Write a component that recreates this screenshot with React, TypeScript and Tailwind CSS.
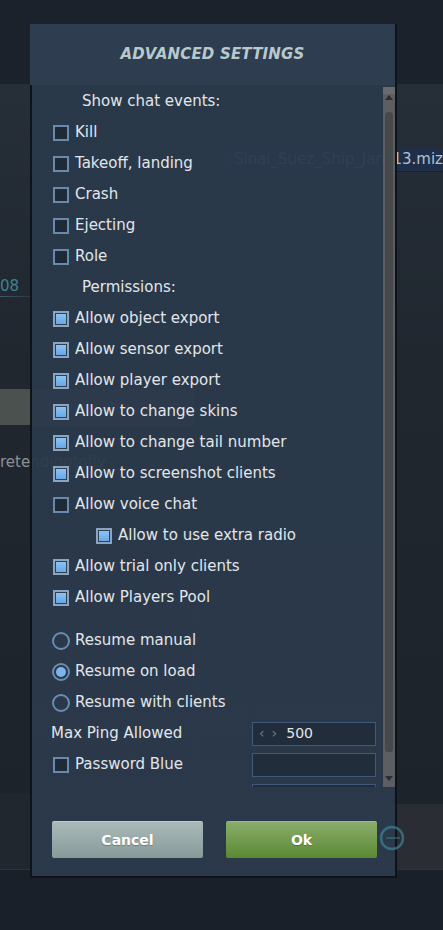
import React from "react";

const FONT = "font-['DejaVu_Sans','Noto_Sans',sans-serif]";

function Box({ checked }: { checked: boolean }) {
  return (
    <div
      className={
        "w-[16px] h-[16px] shrink-0 border-2 p-px " +
        (checked ? "border-[#8aa5c2] bg-[#32414f]" : "border-[#6a8aad] bg-[#1f2a37]")
      }
    >
      {checked && <div className="w-full h-full bg-[linear-gradient(180deg,#8cc3f3,#6aa7e6)]" />}
    </div>
  );
}

function Radio({ selected }: { selected: boolean }) {
  return (
    <div className="w-[18px] h-[18px] shrink-0 rounded-full border-2 border-[#6a8cb0] flex items-center justify-center">
      {selected && <div className="w-[10px] h-[10px] rounded-full bg-[#7ab5ee]" />}
    </div>
  );
}

type Row =
  | { kind: "label"; text: string }
  | { kind: "check"; text: string; checked: boolean; indent?: boolean };

const rows: Row[] = [
  { kind: "label", text: "Show chat events:" },
  { kind: "check", text: "Kill", checked: false },
  { kind: "check", text: "Takeoff, landing", checked: false },
  { kind: "check", text: "Crash", checked: false },
  { kind: "check", text: "Ejecting", checked: false },
  { kind: "check", text: "Role", checked: false },
  { kind: "label", text: "Permissions:" },
  { kind: "check", text: "Allow object export", checked: true },
  { kind: "check", text: "Allow sensor export", checked: true },
  { kind: "check", text: "Allow player export", checked: true },
  { kind: "check", text: "Allow to change skins", checked: true },
  { kind: "check", text: "Allow to change tail number", checked: true },
  { kind: "check", text: "Allow to screenshot clients", checked: true },
  { kind: "check", text: "Allow voice chat", checked: false },
  { kind: "check", text: "Allow to use extra radio", checked: true, indent: true },
  { kind: "check", text: "Allow trial only clients", checked: true },
  { kind: "check", text: "Allow Players Pool", checked: true },
];

const radios = [
  { text: "Resume manual", sel: false },
  { text: "Resume on load", sel: true },
  { text: "Resume with clients", sel: false },
];

function Scrollbar() {
  return (
    <div className="w-[12px] mt-[2px] h-[700px] bg-[#5d5e61] flex flex-col items-center shrink-0">
      <div className="h-[7px] w-full bg-[#6a6b6e]" />
      <div className="mt-[1px] w-0 h-0 border-l-[4px] border-r-[4px] border-b-[5px] border-l-transparent border-r-transparent border-b-[#2c2d30]" />
      <div className="mt-[12px] w-[8px] h-[640px] rounded-t-[4px] rounded-b-[3px] bg-[#47484b]" />
      <div className="mt-auto mb-[6px] w-0 h-0 border-l-[4px] border-r-[4px] border-t-[5px] border-l-transparent border-r-transparent border-t-[#2c2d30]" />
    </div>
  );
}

export default function App() {
  return (
    <div className={"relative w-[443px] h-[930px] overflow-hidden bg-[#19202a] " + FONT}>
      {/* background */}
      <div className="h-[85px] bg-[#1b222b] border-b border-[#262e38]" />
      <div className="h-[785px] flex bg-[linear-gradient(180deg,#262e38_0%,#20272f_35%,#1c232b_100%)] border-b border-[#2b323b]">
        <div className="w-[216px] flex flex-col">
          <div className="mt-[191px] h-[20px] leading-[20px] text-[15px] text-[#3f8291]">08</div>
          <div className="h-px w-[45px] bg-[linear-gradient(90deg,#3b5c66,transparent)]" />
          <div className="mt-[92px] h-[36px] w-[195px] bg-[#4a514f] flex items-center pl-[45px] text-[15px] text-[#6f7876]">
            Advanced
          </div>
          <div className="mt-[27px] h-[20px] leading-[20px] text-[15px] text-[#8a9196] whitespace-nowrap">
            retendingtofly
          </div>
          <div className="mt-auto h-[75px] bg-[#20272f]" />
        </div>
        <div className="flex-1 border-l border-[#2e3944] flex flex-col">
          <div className="mt-[62px] ml-[20px] h-[25px] bg-[#1e3049] border-b border-[#17202b] flex items-center pl-[14px] text-[15px] text-[#b4c0cc] whitespace-nowrap overflow-hidden">
            Sinai_Suez_Ship_Jan_13.miz
          </div>
          <div className="mt-auto h-[65px] bg-[#2a2d33]" />
        </div>
      </div>

      {/* dialog */}
      <div className="absolute left-[30px] top-[24px] w-[367px] h-[854px] flex flex-col border-r-2 border-b-2 border-[#0e1319]">
        <div className="h-[61px] bg-[#2e3d4f] flex items-center justify-center">
          <span className="text-[15px] font-bold italic text-[#b8c9cd] tracking-[0.2px]">ADVANCED SETTINGS</span>
        </div>
        <div className="flex-1 flex flex-col border-l-2 border-[#0e1319] bg-[linear-gradient(180deg,rgba(42,57,74,0.95),rgba(43,58,76,0.94))]">
          <div className="h-[702px] flex">
            <div className="flex-1 overflow-hidden pl-[21px] pt-px text-[15px] text-[#e2e6e9]">
              {rows.map((r, i) =>
                r.kind === "label" ? (
                  <div key={i} className="h-[31px] flex items-center pl-[29px] whitespace-nowrap">
                    {r.text}
                  </div>
                ) : (
                  <div
                    key={i}
                    className={"h-[31px] flex items-center gap-[6px] whitespace-nowrap " + (r.indent ? "pl-[43px]" : "")}
                  >
                    <Box checked={r.checked} />
                    <span>{r.text}</span>
                  </div>
                )
              )}
              <div className="h-[12px]" />
              {radios.map((r, i) => (
                <div key={i} className="h-[31px] flex items-center gap-[5px] -ml-px whitespace-nowrap">
                  <Radio selected={r.sel} />
                  <span>{r.text}</span>
                </div>
              ))}
              <div className="h-[31px] flex items-center whitespace-nowrap">
                <span className="-ml-[2px]">Max Ping Allowed</span>
                <div className="ml-auto mr-[7px] w-[124px] h-[24px] border border-[#3e5979] bg-[#222d3b] flex items-center pl-[6px] text-[14px]">
                  <span className="text-[#6f7c8a]">‹</span>
                  <span className="ml-[7px] text-[#6f7c8a]">›</span>
                  <span className="ml-[9px] text-[#e2e6e9]">500</span>
                </div>
              </div>
              <div className="h-[31px] flex items-center gap-[6px] whitespace-nowrap">
                <Box checked={false} />
                <span>Password Blue</span>
                <div className="ml-auto mr-[7px] w-[124px] h-[24px] border border-[#3e5979] bg-[#222d3b]" />
              </div>
              <div className="h-[31px] flex items-center">
                <div className="ml-auto mr-[7px] w-[124px] h-[24px] border border-[#3e5979] bg-[#222d3b]" />
              </div>
            </div>
            <Scrollbar />
          </div>
          <div className="flex pt-[34px] pl-[20px] gap-[23px]">
            <button className="w-[151px] h-[37px] rounded-[2px] border-t border-[#c0cccb] bg-[linear-gradient(180deg,#a9b9b8,#879a9a)] text-white font-bold text-[14px] [text-shadow:0_1px_1px_rgba(0,0,0,0.25)]">
              Cancel
            </button>
            <button className="w-[151px] h-[37px] rounded-[2px] border-t border-[#9cbd7e] bg-[linear-gradient(180deg,#8aad6b,#5a8933)] text-white font-bold text-[14px] [text-shadow:0_1px_1px_rgba(0,0,0,0.25)]">
              Ok
            </button>
          </div>
        </div>
      </div>

      {/* circle icon over dialog edge */}
      <svg className="absolute left-[379px] top-[825px]" width="26" height="26" viewBox="0 0 26 26">
        <circle cx="13" cy="13" r="11" fill="none" stroke="#3f7e8d" strokeWidth="2.5" opacity="0.75" />
        <line x1="7" y1="13" x2="21" y2="13" stroke="#3f7e8d" strokeWidth="1.6" opacity="0.6" />
      </svg>
    </div>
  );
}
